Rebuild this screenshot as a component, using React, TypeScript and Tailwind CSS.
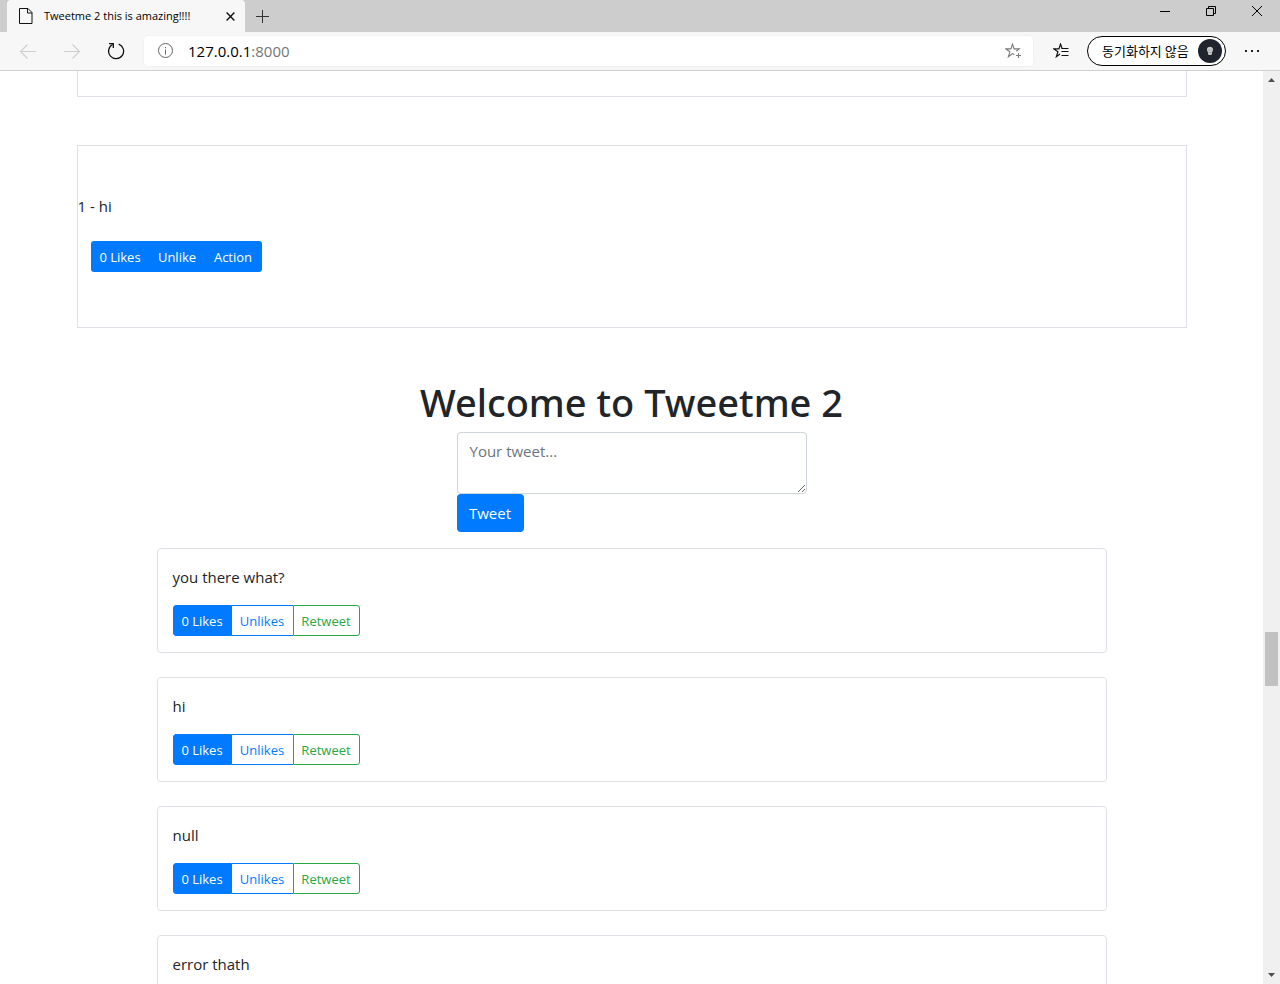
import React from 'react';

const tweets = ['you there what?', 'hi', 'null', 'error thath'];

function PageIcon() {
  return (
    <svg width="14" height="16" viewBox="0 0 14 16" fill="none" stroke="#111" aria-hidden="true">
      <path d="M.5.5h8.500l4 4V15.500H.5z" />
      <path d="M8.500.5V5H13" />
    </svg>
  );
}

function TabCloseIcon() {
  return (
    <svg width="9" height="9" viewBox="0 0 9 9" stroke="#111" strokeWidth="1.400" aria-hidden="true">
      <path d="M.6.6l7.800 7.800M8.400.6L.6 8.400" />
    </svg>
  );
}

function PlusIcon() {
  return (
    <svg width="13" height="13" viewBox="0 0 13 13" stroke="#333" aria-hidden="true">
      <path d="M6.500 0v13M0 6.500h13" />
    </svg>
  );
}

function ArrowIcon({ flip = false }: { flip?: boolean }) {
  return (
    <svg width="16" height="15" viewBox="0 0 16 15" fill="none" stroke="#cfcfcf" strokeWidth="1.100" className={flip ? 'rotate-180' : ''} aria-hidden="true">
      <path d="M16 7.500H.8M7.500.5l-7 7 7 7" />
    </svg>
  );
}

function ReloadIcon() {
  return (
    <svg width="18" height="18" viewBox="0 0 18 18" fill="none" stroke="#111" strokeWidth="1.300" aria-hidden="true">
      <path d="M11.700 2.100A7.500 7.500 0 1 1 5.600 2.500" />
      <path d="M2 1.600h4.300V6" />
    </svg>
  );
}

function InfoIcon() {
  return (
    <svg width="16" height="16" viewBox="0 0 16 16" fill="none" stroke="#666" aria-hidden="true">
      <circle cx="7.500" cy="7.500" r="7" />
      <path d="M7.500 6.500v5M7.500 4v1.300" />
    </svg>
  );
}

function StarAddIcon() {
  return (
    <svg width="16" height="16" viewBox="0 0 16 16" fill="none" stroke="#7a7a7a" strokeWidth="1.100" aria-hidden="true">
      <path d="M9.300 11.600L7.500 10.600 3.400 13.700 4.900 8.800.9 5.900H5.900L7.500 1.100 9.100 5.900H14.200L11.200 8.200" />
      <path d="M13.500 10v5M11 12.500h5" />
    </svg>
  );
}

function FavoritesIcon() {
  return (
    <svg width="16" height="16" viewBox="0 0 16 16" fill="none" stroke="#111" strokeWidth="1.200" aria-hidden="true">
      <path d="M7 11L3.400 13.700 4.900 8.800.9 5.900H5.900L7.500 1.100 9.100 5.500" />
      <path d="M8.500 5.500H15.500M8.500 8.500H15.500M8.500 12.500H15.500" />
    </svg>
  );
}

function Avatar() {
  return (
    <svg width="24" height="24" viewBox="0 0 24 24" aria-hidden="true">
      <circle cx="12" cy="12" r="12" fill="#20242c" />
      <path d="M9 10.500C8.600 6.700 15.400 6.700 15 10.500c0 1.500-.6 2-1 3v1.700c-.6 1-3.400 1-4 0v-1.700c-.4-1-1-1.500-1-3z" fill="#c9c9cc" />
      <path d="M10 11h1.500M12.500 11H14M10.500 13.500h3" stroke="#8e8e94" strokeWidth=".7" />
    </svg>
  );
}

function TitleBar() {
  return (
    <header className="flex h-8 shrink-0 items-stretch bg-[#cdcdcd] pl-[7px]">
      <div className="flex w-[238px] items-center rounded-t bg-[#f7f7f7] pr-2.5 pl-3">
        <PageIcon />
        <span className="ml-[11px] flex-1 text-[11px] whitespace-nowrap text-black">Tweetme 2 this is amazing!!!!</span>
        <button type="button" aria-label="Close tab">
          <TabCloseIcon />
        </button>
      </div>
      <button type="button" aria-label="New tab" className="ml-[11px]">
        <PlusIcon />
      </button>
      <div className="ml-auto flex h-[22px] items-stretch">
        <button type="button" aria-label="Minimize" className="flex w-[46px] items-center justify-center">
          <svg width="10" height="10" viewBox="0 0 10 10" stroke="#000" aria-hidden="true">
            <path d="M0 5.500h10" />
          </svg>
        </button>
        <button type="button" aria-label="Restore" className="flex w-[46px] items-center justify-center">
          <svg width="10" height="10" viewBox="0 0 10 10" fill="none" stroke="#000" aria-hidden="true">
            <path d="M.5 2.500h7v7h-7zM2.500 2.500v-2h7v7h-2" />
          </svg>
        </button>
        <button type="button" aria-label="Close" className="flex w-[46px] items-center justify-center">
          <svg width="10" height="10" viewBox="0 0 10 10" stroke="#000" aria-hidden="true">
            <path d="M0 0l10 10M10 0L0 10" />
          </svg>
        </button>
      </div>
    </header>
  );
}

function Toolbar() {
  return (
    <nav className="flex h-[39px] shrink-0 items-center border-b border-[#d0d0d0] bg-[#f7f7f7] px-5">
      <button type="button" aria-label="Back">
        <ArrowIcon />
      </button>
      <button type="button" aria-label="Forward" className="ml-7">
        <ArrowIcon flip />
      </button>
      <button type="button" aria-label="Reload" className="ml-[27px]">
        <ReloadIcon />
      </button>
      <div className="ml-[19px] flex h-[30px] min-w-0 flex-1 items-center rounded bg-white pr-3 pl-3.5 shadow-[0_0_2px_#00000014]">
        <InfoIcon />
        <a href="#address" className="ml-3.5 flex-1 text-[15px] text-black">
          127.0.0.1<span className="text-[#767676]">:8000</span>
        </a>
        <button type="button" aria-label="Add to favorites">
          <StarAddIcon />
        </button>
      </div>
      <button type="button" aria-label="Favorites" className="ml-5">
        <FavoritesIcon />
      </button>
      <button type="button" className="ml-[18px] flex h-[30px] w-[139px] shrink-0 items-center justify-between rounded-full border border-black bg-white pr-[3px] pl-3.5">
        <span className="font-['Noto_Sans_CJK_KR',sans-serif] text-[13px] leading-4 whitespace-nowrap text-black">동기화하지 않음</span>
        <Avatar />
      </button>
      <button type="button" aria-label="Settings" className="ml-[18px]">
        <svg width="16" height="4" viewBox="0 0 16 4" fill="#222" aria-hidden="true">
          <path d="M1 1h2v2H1zM7 1h2v2H7zM13 1h2v2h-2z" />
        </svg>
      </button>
    </nav>
  );
}

function Tweet({ text }: { text: string }) {
  return (
    <article className="mb-6 rounded border border-[#dee2e6] px-[15px] py-4">
      <p className="mb-4 leading-6">{text}</p>
      <div className="flex h-[31px] text-[13px] leading-5">
        <button type="button" className="w-[59px] rounded-l-[3px] border border-[#007bff] bg-[#007bff] text-white">0 Likes</button>
        <button type="button" className="w-[61px] border-y border-[#007bff] text-[#007bff]">Unlikes</button>
        <button type="button" className="w-[67px] rounded-r-[3px] border border-[#28a745] text-[#28a745]">Retweet</button>
      </div>
    </article>
  );
}

function ScrollBar() {
  return (
    <div aria-hidden="true" className="flex w-[17px] shrink-0 flex-col items-center bg-[#f0f0f0]">
      <svg width="17" height="17" viewBox="0 0 17 17" fill="#505050" className="shrink-0">
        <path d="M5 11l3.500-4 3.500 4z" />
      </svg>
      <div className="flex w-full flex-1 flex-col px-0.5">
        <div className="h-[61.9%]" />
        <div className="h-[54px] bg-[#c1c1c1]" />
      </div>
      <svg width="17" height="17" viewBox="0 0 17 17" fill="#505050" className="shrink-0">
        <path d="M5 6l3.500 4L12 6z" />
      </svg>
    </div>
  );
}

export default function App() {
  return (
    <div className="flex h-screen flex-col overflow-hidden bg-white font-['Open_Sans','Noto_Sans',sans-serif] text-[15px] text-[#212529]">
      <TitleBar />
      <Toolbar />
      <div className="flex min-h-0 flex-1">
        <main className="min-w-0 flex-1 overflow-y-auto [scrollbar-width:none]">
          <div className="mx-auto w-full max-w-[1110px]">
            <div className="mb-12 h-[26px] border-x border-b border-[#dee2e6]" />
            <section className="mb-12 border border-[#dee2e6] pt-12 pb-[55px]">
              <p className="leading-6">1 - hi</p>
              <div className="mt-[23px] ml-[13px] inline-flex h-[31px] overflow-hidden rounded-[3px] bg-[#007bff] align-top text-[13px] leading-5 text-white">
                <button type="button" className="w-[59px]">0 Likes</button>
                <button type="button" className="w-[55px]">Unlike</button>
                <button type="button" className="w-[57px]">Action</button>
              </div>
            </section>
            <h1 className="mb-1.5 pt-0.5 text-center font-['Noto_Sans','Open_Sans',sans-serif] text-[38px] leading-[48px] font-medium">Welcome to Tweetme 2</h1>
            <form className="mx-auto mb-4 max-w-[350px]" onSubmit={(e) => e.preventDefault()}>
              <textarea
                aria-label="Your tweet"
                placeholder="Your tweet..."
                className="block h-[62px] w-full rounded border border-[#ced4da] px-3 py-1.5 leading-6 placeholder:text-[#6c757d]"
              />
              <button type="submit" className="h-[38px] w-[67px] rounded bg-[#007bff] text-white">Tweet</button>
            </form>
            <div className="mx-auto max-w-[950px]">
              {tweets.map((text) => (
                <Tweet key={text} text={text} />
              ))}
            </div>
          </div>
        </main>
        <ScrollBar />
      </div>
    </div>
  );
}
